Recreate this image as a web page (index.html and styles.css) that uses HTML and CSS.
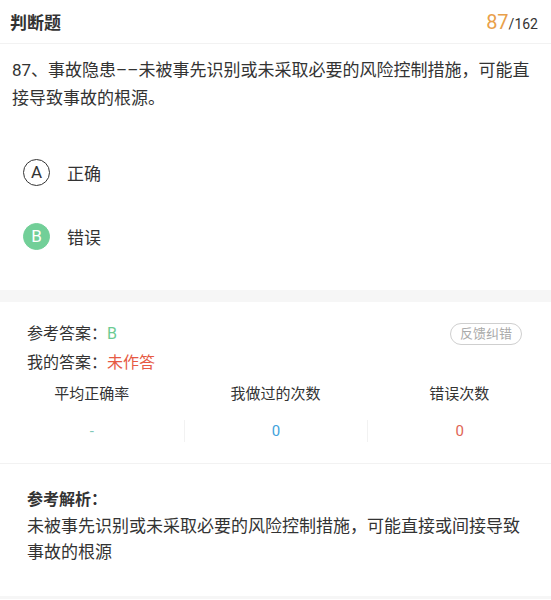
FILE: index.html
```html
<!DOCTYPE html>
<html>
<head>
  <meta charset="utf-8">
  <title>判断题</title>
  <link rel="stylesheet" href="styles.css">
</head>
<body>
  <div class="header">
    <div class="header-title">判断题</div>
    <div class="progress"><span class="current">87</span>/162</div>
  </div>

  <div class="question">87、事故隐患––未被事先识别或未采取必要的风险控制措施，可能直接导致事故的根源。</div>

  <div class="options">
    <div class="option">
      <div class="option-mark">A</div>
      <div class="option-text">正确</div>
    </div>
    <div class="option">
      <div class="option-mark selected">B</div>
      <div class="option-text">错误</div>
    </div>
  </div>

  <div class="gap"></div>

  <div class="answer">
    <div class="answer-row">
      <div>参考答案：<span class="right-answer">B</span></div>
      <div class="feedback-btn">反馈纠错</div>
    </div>
    <div class="answer-row">
      <div>我的答案：<span class="my-answer">未作答</span></div>
    </div>

    <div class="stats">
      <div class="stat">
        <div class="stat-label">平均正确率</div>
        <div class="stat-value rate">-</div>
      </div>
      <div class="stat">
        <div class="stat-label">我做过的次数</div>
        <div class="stat-value done">0</div>
      </div>
      <div class="stat">
        <div class="stat-label">错误次数</div>
        <div class="stat-value wrong">0</div>
      </div>
    </div>
  </div>

  <div class="analysis">
    <div class="analysis-title">参考解析：</div>
    <div class="analysis-text">未被事先识别或未采取必要的风险控制措施，可能直接或间接导致事故的根源</div>
  </div>
</body>
</html>
```

FILE: styles.css
```css
* {
  box-sizing: border-box;
}
body {
  margin: 0;
  width: 551px;
  font-family: Roboto, "Noto Sans CJK SC", sans-serif;
  color: #333;
  background: #fff;
}
.header {
  display: flex;
  justify-content: space-between;
  align-items: center;
  height: 44px;
  padding: 0 13px 0 10px;
  border-bottom: 1px solid #f2f2f2;
}
.header-title {
  font-size: 17px;
  font-weight: bold;
}
.progress {
  font-size: 14px;
  color: #333;
}
.progress .current {
  font-size: 20px;
  color: #e9a04a;
}
.question {
  padding: 12px 12px 0;
  font-size: 17px;
  line-height: 28px;
}
.options {
  margin-top: 28px;
}
.option {
  display: flex;
  align-items: center;
  height: 64px;
  padding-left: 23px;
}
.option-mark {
  width: 27px;
  height: 27px;
  border: 1px solid #333;
  border-radius: 50%;
  display: flex;
  justify-content: center;
  align-items: center;
  font-size: 17px;
}
.option-mark.selected {
  border-color: #72cf98;
  background: #72cf98;
  color: #fff;
}
.option-text {
  margin-left: 17px;
  font-size: 17px;
}
.gap {
  margin-top: 22px;
  height: 12px;
  background: #f6f6f6;
}
.answer {
  padding: 17px 27px 0;
  font-size: 16px;
}
.answer-row {
  display: flex;
  justify-content: space-between;
  align-items: center;
  line-height: 29px;
}
.right-answer {
  color: #6ccb92;
}
.my-answer {
  color: #e65a44;
}
.feedback-btn {
  margin-right: 2px;
  height: 22px;
  padding: 0 9px;
  border: 1px solid #cfcfcf;
  border-radius: 11px;
  font-size: 13px;
  line-height: 20px;
  color: #aaa;
}
.stats {
  display: flex;
  margin: 5px -27px 0;
  padding-bottom: 21px;
  border-bottom: 1px solid #f2f2f2;
}
.stat {
  flex: 1;
  text-align: center;
}
.stat-label {
  font-size: 15px;
  line-height: 24px;
}
.stat-value {
  margin-top: 14px;
  font-size: 15px;
  line-height: 22px;
}
.stat + .stat .stat-value {
  border-left: 1px solid #f2f2f2;
}
.stat-value.rate {
  color: #7fc8b8;
}
.stat-value.done {
  color: #3ea2dc;
}
.stat-value.wrong {
  color: #e06454;
}
.analysis {
  padding: 23px 27px 0;
  height: 135px;
  border-bottom: 3px solid #f6f6f6;
}
.analysis-title {
  font-size: 16px;
  font-weight: bold;
  line-height: 26px;
}
.analysis-text {
  font-size: 17px;
  line-height: 26px;
}
```
